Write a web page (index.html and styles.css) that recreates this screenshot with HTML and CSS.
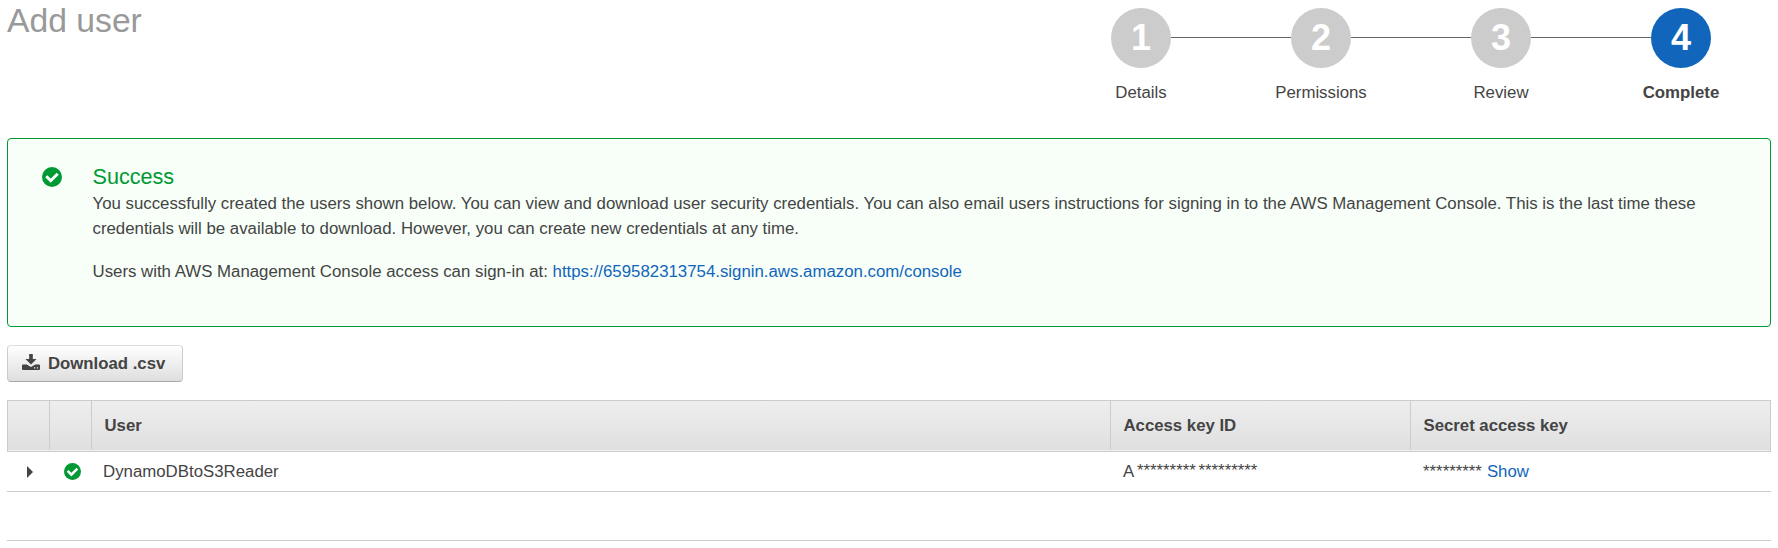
FILE: index.html
```html
<!DOCTYPE html>
<html lang="en">
<head>
<meta charset="utf-8">
<title>Add user</title>
<link rel="stylesheet" href="styles.css">
</head>
<body>
<header class="header">
  <h1 class="title">Add user</h1>
  <ol class="steps">
    <li class="step"><span class="num">1</span><span class="label">Details</span></li>
    <li class="step"><span class="num">2</span><span class="label">Permissions</span></li>
    <li class="step"><span class="num">3</span><span class="label">Review</span></li>
    <li class="step active"><span class="num">4</span><span class="label">Complete</span></li>
  </ol>
</header>
<section class="alert">
  <svg class="alert-icon" viewBox="0 0 20 20"><circle cx="10" cy="10" r="10"/><path d="M4.300 9.300l4.400 4.400 7-7"/></svg>
  <div class="alert-body">
    <h2 class="alert-title">Success</h2>
    <p class="text">You successfully created the users shown below. You can view and download user security credentials. You can also email users instructions for signing in to the AWS Management Console. This is the last time these<br>credentials will be available to download. However, you can create new credentials at any time.</p>
    <p class="text">Users with AWS Management Console access can sign-in at: <a class="link" href="#">https://659582313754.signin.aws.amazon.com/console</a></p>
  </div>
</section>
<button class="download"><svg class="download-icon" viewBox="0 0 18 16"><path d="M7.200 0h3.600v5h3.700L9 10.500 3.500 5h3.700z"/><path fill-rule="evenodd" d="M1 10.500h3.700L9 13l4.300-2.500H17q1 0 1 1V15q0 1-1 1H1q-1 0-1-1v-3.500q0-1 1-1zM12 13.300v1.200h1.300v-1.200zm2.800 0v1.200h1.300v-1.200z"/></svg><span>Download .csv</span></button>
<div class="table">
  <div class="row head"><div></div><div></div><div>User</div><div>Access key ID</div><div>Secret access key</div></div>
  <div class="row data">
    <div class="expand"><svg class="caret" viewBox="0 0 6 12"><path d="M0 0l6 6-6 6z"/></svg></div>
    <div class="status"><svg class="row-icon" viewBox="0 0 20 20"><circle cx="10" cy="10" r="10"/><path d="M4.300 9.300l4.400 4.400 7-7"/></svg></div>
    <div>DynamoDBtoS3Reader</div>
    <div class="key"><span>A</span><span class="mask">*********</span><span class="mask">*********</span></div>
    <div class="key"><span>*********</span><a class="link show" href="#">Show</a></div>
  </div>
</div>
<hr class="rule">
</body>
</html>
```
FILE: styles.css
```css
* { box-sizing: border-box; }
body { margin: 0; padding: 0 7px; height: 548px; overflow: hidden; background: #fff; color: #444; font: 16.82px/25px "Liberation Sans", Arial, sans-serif; }
.header { display: flex; justify-content: space-between; height: 138px; }
.title { margin: 0; font-size: 33.7px; font-weight: 400; line-height: 41px; color: #999; }
.steps { display: flex; list-style: none; margin: 0; padding: 8px 0 0; }
.step { width: 180px; display: flex; flex-direction: column; align-items: center; position: relative; }
.step + .step::before { content: ""; position: absolute; top: 29px; left: -60px; width: 120px; height: 1px; background: #666; }
.num { width: 60px; height: 60px; border-radius: 50%; background: #ccc; color: #fff; font-size: 36px; font-weight: 700; line-height: 60px; text-align: center; }
.label { margin-top: 12px; }
.active .num { background: #1166bb; }
.active .label { font-weight: 700; }
.alert { display: flex; height: 189px; border: 1px solid #093; border-radius: 4px; background: #f7fff8; padding: 25px 34px; }
.alert-icon { width: 20px; height: 20px; margin: 3px 30.5px 0 0; }
.alert-icon, .row-icon { fill: #009933; flex: none; }
.alert-icon path, .row-icon path { fill: none; stroke: #fff; stroke-width: 3; }
.alert-title { margin: 0 0 2px; font-size: 21.6px; font-weight: 400; line-height: 25px; color: #093; }
.text { margin: 0 0 18px; white-space: nowrap; }
.link { color: #1166bb; text-decoration: none; }
.download { display: flex; align-items: center; margin: 18px 0; width: 176px; height: 37px; padding: 0 14px; border: 1px solid #ccc; border-color: #ddd #ccc #aaa; border-radius: 4px; background: linear-gradient(#fff, #dedede); color: #444; font: bold 16.75px "Liberation Sans", Arial, sans-serif; white-space: nowrap; }
.download-icon { width: 18px; height: 16px; margin: 0 8px 4px 0; fill: #444; flex: none; }
.row { display: grid; grid-template-columns: 41px 42px 1019px 300px 1fr; border: 1px solid #ccc; }
.row > div { display: flex; align-items: center; padding-left: 12px; }
.head { height: 52px; font-weight: 700; font-size: 16.75px; background: linear-gradient(#eee, #dfdfdf); box-shadow: inset 0 -1px #f0f0f0; }
.head > div { margin-bottom: 1px; }
.head > div + div { border-left: 1px solid #ccc; padding-left: 12.5px; }
.data { grid-template-columns: 42px 42px 1019px 300px 1fr; height: 40px; border-width: 0 0 1px; }
.data > .expand { padding-left: 19.5px; }
.data > .status { padding-left: 14.7px; }
.data > .key { padding-left: 13px; }
.caret { width: 6px; height: 12px; fill: #444; }
.row-icon { width: 17px; height: 17px; }
.mask { margin: 0 0 2px 2.7px; }
.show { margin-left: 5px; }
.rule { margin: 48px 0 0; border: 0; border-top: 1px solid #ccc; }
```
